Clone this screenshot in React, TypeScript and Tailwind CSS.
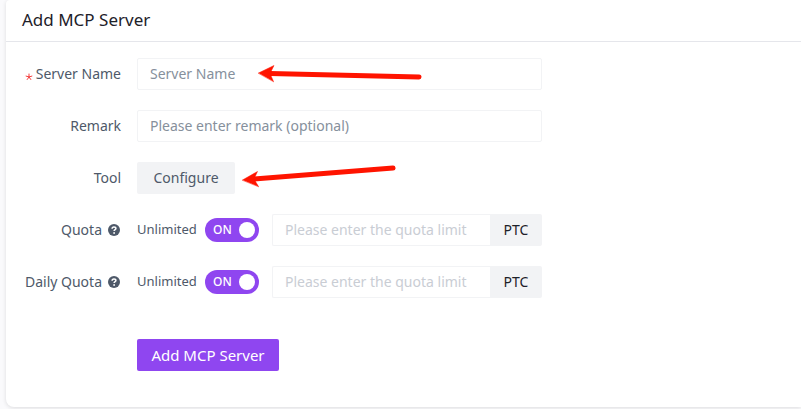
import { useState } from 'react';
import type { ReactNode } from 'react';

interface FormRowProps {
  label: string;
  htmlFor: string;
  required?: boolean;
  help?: boolean;
  children: ReactNode;
}

function HelpIcon() {
  return (
    <svg viewBox="0 0 14 14" className="ml-[5px] h-3.5 w-3.5 shrink-0" aria-hidden="true">
      <circle cx="7" cy="7" r="6" fill="#4e5969" />
      <path
        d="M5.1 5.8C5.1 4.7 5.9 4 7 4s1.9.6 1.9 1.5c0 1.1-1.8 1.2-1.8 2.5"
        fill="none"
        stroke="#fff"
        strokeWidth="1.5"
      />
      <circle cx="7.1" cy="10" r="0.9" fill="#fff" />
    </svg>
  );
}

function FormRow({ label, htmlFor, required, help, children }: FormRowProps) {
  return (
    <div className="flex gap-4">
      <label
        htmlFor={htmlFor}
        className="flex h-8 w-[115px] shrink-0 items-center justify-end whitespace-nowrap text-sm text-[#4e5969]"
      >
        {required && (
          <svg viewBox="0 0 8 8" className="mr-[3px] mt-1.5 h-2 w-2" aria-hidden="true">
            <path
              d="M4 4V1M4 4l2.9-.9M4 4l1.8 2.5M4 4L2.200 6.500M4 4L1.100 3.100"
              fill="none"
              stroke="#f53f3f"
              strokeWidth="1"
              strokeLinecap="round"
            />
          </svg>
        )}
        {label}
        {help && <HelpIcon />}
      </label>
      <div className="flex w-full max-w-[405px] items-center">{children}</div>
    </div>
  );
}

function QuotaRow({ id, label }: { id: string; label: string }) {
  const [unlimited, setUnlimited] = useState(true);

  return (
    <FormRow label={label} htmlFor={id} help>
      <label className="flex shrink-0 cursor-pointer items-center gap-2 text-[13px] text-[#4e5969]">
        <span className="w-[60px] whitespace-nowrap">Unlimited</span>
        <input
          type="checkbox"
          role="switch"
          checked={unlimited}
          onChange={(e) => setUnlimited(e.target.checked)}
          className="peer sr-only"
        />
        <span className="flex h-6 w-[54px] items-center justify-between rounded-full bg-[#c9cdd4] pl-2 pr-1 text-xs font-medium text-white peer-checked:bg-[#8f46f0]">
          {unlimited ? 'ON' : 'OFF'}
          <span className="h-4 w-4 rounded-full bg-white" />
        </span>
      </label>
      <input
        id={id}
        type="text"
        disabled={unlimited}
        placeholder="Please enter the quota limit"
        className="ml-[13px] h-8 w-full min-w-0 rounded-l-xs border border-r-0 border-[#f2f3f5] bg-white px-3 pb-0.5 text-sm placeholder:text-[#c9cdd4]"
      />
      <span className="flex h-8 w-[52px] shrink-0 items-center justify-center rounded-r-xs bg-[#f2f3f5] text-sm text-[#1d2129]">
        PTC
      </span>
    </FormRow>
  );
}

export default function App() {
  const inputClass =
    'h-8 w-full rounded-xs border border-[#f2f3f5] bg-white px-3 pb-0.5 text-sm text-[#1d2129] placeholder:text-[#86909c]';

  return (
    <div className="overflow-hidden bg-[#fafafc] pb-0.5 pl-1.5 font-['Noto_Sans','Open_Sans',sans-serif]">
      <div className="relative rounded-tl-sm rounded-bl-lg bg-white pb-9 shadow-[0_1px_4px_rgba(0,0,0,0.12)]">
        <h1 className="border-b border-[#e5e6eb] px-4 pb-2 pt-1.5 text-[17px] leading-[27px] text-[#1d2129]">
          Add MCP Server
        </h1>

        <form className="flex flex-col gap-5 pt-4" onSubmit={(e) => e.preventDefault()}>
          <FormRow label="Server Name" htmlFor="server-name" required>
            <input id="server-name" type="text" placeholder="Server Name" className={inputClass} />
          </FormRow>
          <FormRow label="Remark" htmlFor="remark">
            <input
              id="remark"
              type="text"
              placeholder="Please enter remark (optional)"
              className={inputClass}
            />
          </FormRow>
          <FormRow label="Tool" htmlFor="tool">
            <button id="tool" type="button" className="h-8 w-[98px] rounded-xs bg-[#f2f3f5] text-sm text-[#4e5969]">
              Configure
            </button>
          </FormRow>
          <QuotaRow id="quota" label="Quota" />
          <QuotaRow id="daily-quota" label="Daily Quota" />

          <div className="pl-[131px] pt-[21px]">
            <button type="submit" className="h-8 w-[142px] rounded-xs bg-[#8f46f0] text-[15px] text-white">
              Add MCP Server
            </button>
          </div>
        </form>

        {/* Arrows pointing at the name field and the tool button */}
        <svg
          viewBox="0 0 200 140"
          className="pointer-events-none absolute left-[230px] top-[55px] h-[140px] w-[200px]"
          aria-hidden="true"
        >
          <g fill="#ff1400" stroke="#ff1400" strokeLinecap="round">
            <path d="M34 18.5L183 22" strokeWidth="5" />
            <path d="M22.500 18L38 10.500L34 18.500L37.500 26.500Z" strokeWidth="0.5" />
            <path d="M18 124L157 113" strokeWidth="5" />
            <path d="M6.500 125L21.500 116.500L18 124L22.500 131.500Z" strokeWidth="0.5" />
          </g>
        </svg>
      </div>
    </div>
  );
}
